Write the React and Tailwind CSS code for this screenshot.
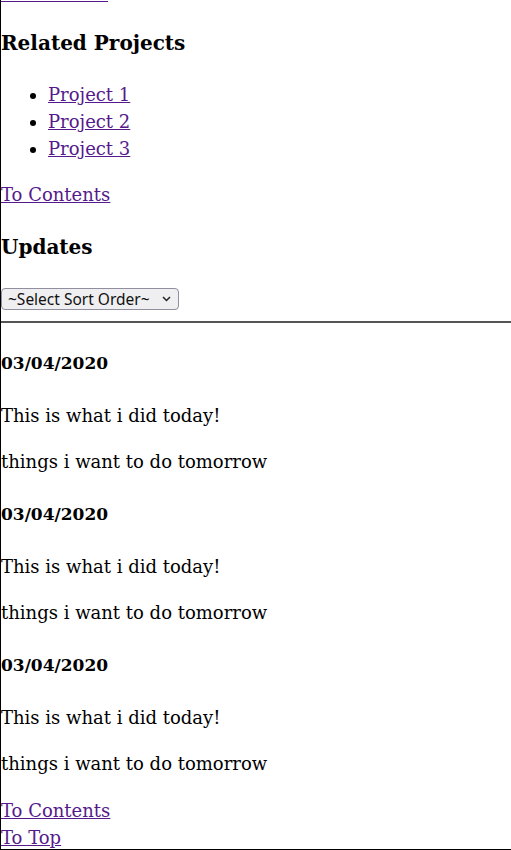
import React from 'react';

const serif = 'font-["DejaVu_Serif","Liberation_Serif",serif]';

const updates = [
  { date: '03/04/2020', did: 'This is what i did today!', next: 'things i want to do tomorrow' },
  { date: '03/04/2020', did: 'This is what i did today!', next: 'things i want to do tomorrow' },
  { date: '03/04/2020', did: 'This is what i did today!', next: 'things i want to do tomorrow' },
];

const linkCls = 'text-[#551a8b] underline';

export default function App() {
  return (
    <div className={`${serif} h-[850px] overflow-hidden border-l border-b border-black text-black text-[18px] leading-[27px] bg-white`}>
      {/* tail of the previous "To Contents" link, scrolled off */}
      <div className="h-[2px] w-[107px] border-b border-[#551a8b]" />

      <h3 className="mt-[27px] text-[20px] leading-[28px] font-bold">Related Projects</h3>
      <ul className="mt-[24px] pl-[47px] list-disc">
        <li><a href="#p1" className={linkCls}>Project 1</a></li>
        <li><a href="#p2" className={linkCls}>Project 2</a></li>
        <li><a href="#p3" className={linkCls}>Project 3</a></li>
      </ul>
      <div className="mt-[19px]">
        <a href="#contents" className={linkCls}>To Contents</a>
      </div>

      <h3 className="mt-[25px] text-[20px] leading-[28px] font-bold">Updates</h3>
      <div className="relative mt-[27px] w-[178px]">
        <select className="block h-[22px] w-[178px] appearance-none rounded-[4px] border border-[#8f8f9d] bg-[#efeff1] pl-[6px] pr-[20px] font-['Noto_Sans',sans-serif] text-[15.5px] leading-[20px] text-[#111]">
          <option>~Select Sort Order~</option>
        </select>
        <svg className="pointer-events-none absolute right-[8px] top-[8px]" width="9" height="6" viewBox="0 0 9 6" fill="none">
          <path d="M1 1l3.5 3.5L8 1" stroke="#222" strokeWidth="1.5" />
        </svg>
      </div>
      <hr className="mt-[11px] border-t-2 border-[#555]" />

      {updates.map((u, i) => (
        <div key={i} className={i === 0 ? 'mt-[27px]' : 'mt-[26px]'}>
          <h4 className="text-[17px] font-bold">{u.date}</h4>
          <p className="mt-[25px]">{u.did}</p>
          <p className="mt-[19px]">{u.next}</p>
        </div>
      ))}

      <div className="mt-[20px]">
        <a href="#contents" className={linkCls}>To Contents</a>
      </div>
      <div>
        <a href="#top" className={linkCls}>To Top</a>
      </div>
    </div>
  );
}
